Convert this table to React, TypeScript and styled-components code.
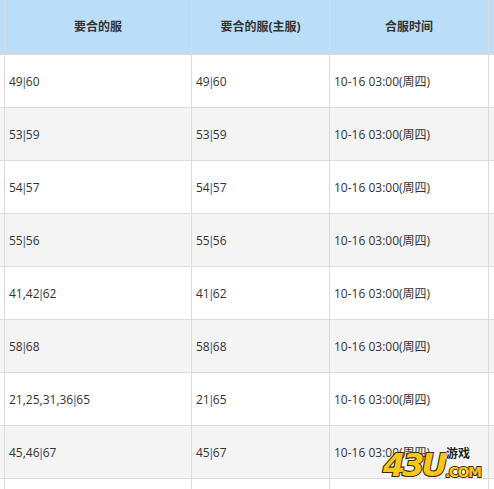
import React from "react";
import styled, { createGlobalStyle } from "styled-components";

const Global = createGlobalStyle`
  html, body { margin: 0; padding: 0; background: #fff; overflow: hidden; }
  body { font-family: "Open Sans", "Noto Sans CJK SC", sans-serif; font-size: 12px; color: #333; }
`;

const Page = styled.div`
  position: relative;
  width: 494px;
  height: 489px;
  overflow: hidden;
`;

const Grid = styled.div`
  display: grid;
  grid-template-columns: 4px 186px 137px 158px 60px;
  grid-auto-rows: 52px;
  grid-template-rows: 54px;
  column-gap: 1px;
  row-gap: 1px;
  background: #dcdcdc;
  width: 560px;
`;

const HeadCell = styled.div`
  background: #badef8;
  border-bottom: 1px solid #d6d6d6;
  display: flex;
  align-items: center;
  justify-content: center;
  font-weight: bold;
  color: #333;
  font-size: 12px;
  padding-bottom: 1px;
`;

const Cell = styled.div<{ $alt: boolean }>`
  background: ${(p) => (p.$alt ? "#f4f4f4" : "#ffffff")};
  display: flex;
  align-items: center;
  padding-left: 4px;
  color: #333;
  font-size: 12px;
  white-space: nowrap;
  overflow: hidden;
`;

const Pipe = styled.span`
  font-family: "Liberation Sans", sans-serif;
  color: #4a6a9a;
`;

const Logo = styled.svg`
  position: absolute;
  left: 378px;
  top: 440px;
`;

const rows: [string, string][] = [
  ["49|60", "49|60"],
  ["53|59", "53|59"],
  ["54|57", "54|57"],
  ["55|56", "55|56"],
  ["41,42|62", "41|62"],
  ["58|68", "58|68"],
  ["21,25,31,36|65", "21|65"],
  ["45,46|67", "45|67"],
  ["", ""],
];

function Servers({ text }: { text: string }) {
  if (!text) return null;
  const [l, r] = text.split("|");
  return (
    <span>
      {l}
      <Pipe>|</Pipe>
      {r}
    </span>
  );
}

export default function App() {
  return (
    <Page>
      <Global />
      <Grid>
        <HeadCell />
        <HeadCell>要合的服</HeadCell>
        <HeadCell>要合的服(主服)</HeadCell>
        <HeadCell>合服时间</HeadCell>
        <HeadCell />
        {rows.map(([a, b], i) => {
          const alt = i % 2 === 1;
          return (
            <React.Fragment key={i}>
              <Cell $alt={alt} />
              <Cell $alt={alt}>
                <Servers text={a} />
              </Cell>
              <Cell $alt={alt}>
                <Servers text={b} />
              </Cell>
              <Cell $alt={alt}>{a ? "10-16 03:00(周四)" : ""}</Cell>
              <Cell $alt={alt} />
            </React.Fragment>
          );
        })}
      </Grid>
      <Logo width="112" height="46" viewBox="0 0 112 46">
        <text
          x="5"
          y="36"
          fontFamily="DejaVu Sans, sans-serif"
          fontWeight="bold"
          fontStyle="italic"
          fontSize="32"
          fill="#f8c51c"
          stroke="#3b2b05"
          strokeWidth="2.2"
          paintOrder="stroke"
          letterSpacing="-3"
        >
          43U
        </text>
        <text
          x="67"
          y="37"
          fontFamily="DejaVu Sans, sans-serif"
          fontWeight="bold"
          fontSize="14"
          fill="#f8c51c"
          stroke="#3b2b05"
          strokeWidth="1.8"
          paintOrder="stroke"
          letterSpacing="-1.5"
        >
          .COM
        </text>
        <text
          x="68"
          y="18"
          fontFamily="Noto Sans CJK SC, sans-serif"
          fontWeight="bold"
          fontSize="12"
          fill="#222"
          stroke="#fff"
          strokeWidth="1.5"
          paintOrder="stroke"
        >
          游戏
        </text>
      </Logo>
    </Page>
  );
}
